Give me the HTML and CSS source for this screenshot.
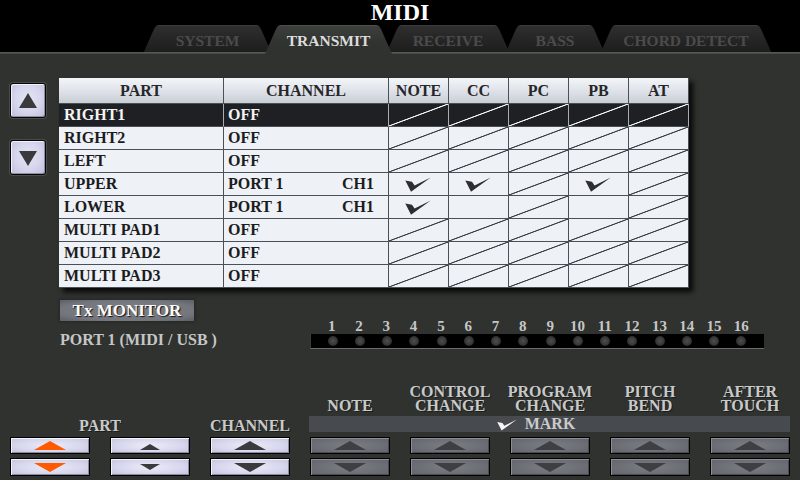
FILE: index.html
```html
<!DOCTYPE html>
<html>
<head>
<meta charset="utf-8">
<title>MIDI</title>
<link rel="stylesheet" href="styles.css">
</head>
<body>
<svg class="defs" width="0" height="0" aria-hidden="true">
  <defs>
    <symbol id="chk" viewBox="0 0 26 15">
      <path d="M0.3 3.6 L7 4.8 L9.6 8.4 L25.7 0.4 L6 14.7 Z"/>
    </symbol>
  </defs>
</svg>
<div class="screen">
  <header class="head">
    <div class="title">MIDI</div>
    <nav class="tabs">
      <div class="tab w-system">SYSTEM</div>
      <div class="tab w-transmit active">TRANSMIT</div>
      <div class="tab w-receive">RECEIVE</div>
      <div class="tab w-bass">BASS</div>
      <div class="tab w-chord">CHORD DETECT</div>
    </nav>
  </header>

  <main class="main">
    <section class="top">
      <div class="scroll">
        <div class="sbtn"><span class="stri up"></span></div>
        <div class="sbtn"><span class="stri down"></span></div>
      </div>

      <div class="grid">
        <div class="c h">PART</div><div class="c h">CHANNEL</div><div class="c h">NOTE</div><div class="c h">CC</div><div class="c h">PC</div><div class="c h">PB</div><div class="c h">AT</div>

        <div class="c sel">RIGHT1</div><div class="c sel ch">OFF</div><div class="c sel na"></div><div class="c sel na"></div><div class="c sel na"></div><div class="c sel na"></div><div class="c sel na"></div>

        <div class="c">RIGHT2</div><div class="c ch">OFF</div><div class="c na"></div><div class="c na"></div><div class="c na"></div><div class="c na"></div><div class="c na"></div>

        <div class="c">LEFT</div><div class="c ch">OFF</div><div class="c na"></div><div class="c na"></div><div class="c na"></div><div class="c na"></div><div class="c na"></div>

        <div class="c">UPPER</div><div class="c ch"><span>PORT 1</span><span>CH1</span></div><div class="c ok"><svg class="chk"><use href="#chk"/></svg></div><div class="c ok"><svg class="chk"><use href="#chk"/></svg></div><div class="c na"></div><div class="c ok"><svg class="chk"><use href="#chk"/></svg></div><div class="c na"></div>

        <div class="c">LOWER</div><div class="c ch"><span>PORT 1</span><span>CH1</span></div><div class="c ok"><svg class="chk"><use href="#chk"/></svg></div><div class="c ok"></div><div class="c na"></div><div class="c ok"></div><div class="c na"></div>

        <div class="c">MULTI PAD1</div><div class="c ch">OFF</div><div class="c na"></div><div class="c na"></div><div class="c na"></div><div class="c na"></div><div class="c na"></div>

        <div class="c">MULTI PAD2</div><div class="c ch">OFF</div><div class="c na"></div><div class="c na"></div><div class="c na"></div><div class="c na"></div><div class="c na"></div>

        <div class="c">MULTI PAD3</div><div class="c ch">OFF</div><div class="c na"></div><div class="c na"></div><div class="c na"></div><div class="c na"></div><div class="c na"></div>
      </div>
    </section>

    <section class="monitor">
      <div class="mon-left">
        <div class="txbtn">Tx MONITOR</div>
        <div class="port">PORT 1 (MIDI / USB )</div>
      </div>
      <div class="mon-right">
        <div class="nums">
          <span>1</span><span>2</span><span>3</span><span>4</span><span>5</span><span>6</span><span>7</span><span>8</span>
          <span>9</span><span>10</span><span>11</span><span>12</span><span>13</span><span>14</span><span>15</span><span>16</span>
        </div>
        <div class="leds">
          <i class="led"></i><i class="led"></i><i class="led"></i><i class="led"></i><i class="led"></i><i class="led"></i><i class="led"></i><i class="led"></i>
          <i class="led"></i><i class="led"></i><i class="led"></i><i class="led"></i><i class="led"></i><i class="led"></i><i class="led"></i><i class="led"></i>
        </div>
      </div>
    </section>

    <section class="controls">
      <div class="lbl l-part">PART</div>
      <div class="lbl l-chan">CHANNEL</div>
      <div class="lbl l-note">NOTE</div>
      <div class="lbl l-cc"><span>CONTROL</span><span>CHANGE</span></div>
      <div class="lbl l-pc"><span>PROGRAM</span><span>CHANGE</span></div>
      <div class="lbl l-pb"><span>PITCH</span><span>BEND</span></div>
      <div class="lbl l-at"><span>AFTER</span><span>TOUCH</span></div>

      <div class="markbar"><svg class="mchk"><use href="#chk"/></svg><span>MARK</span></div>

      <div class="kb up lite c1"><span class="tri up orange"></span></div>
      <div class="kb up lite c2"><span class="tri up small"></span></div>
      <div class="kb up lite c3"><span class="tri up"></span></div>
      <div class="kb up gray c4"><span class="tri up"></span></div>
      <div class="kb up gray c5"><span class="tri up"></span></div>
      <div class="kb up gray c6"><span class="tri up"></span></div>
      <div class="kb up gray c7"><span class="tri up"></span></div>
      <div class="kb up gray c8"><span class="tri up"></span></div>

      <div class="kb down lite c1"><span class="tri down orange"></span></div>
      <div class="kb down lite c2"><span class="tri down small"></span></div>
      <div class="kb down lite c3"><span class="tri down"></span></div>
      <div class="kb down gray c4"><span class="tri down"></span></div>
      <div class="kb down gray c5"><span class="tri down"></span></div>
      <div class="kb down gray c6"><span class="tri down"></span></div>
      <div class="kb down gray c7"><span class="tri down"></span></div>
      <div class="kb down gray c8"><span class="tri down"></span></div>
    </section>
  </main>
</div>
</body>
</html>
```

FILE: styles.css
```css
* { box-sizing: border-box; margin: 0; padding: 0; }

html, body {
  width: 800px;
  height: 480px;
  overflow: hidden;
  background: #2f322f;
}

body {
  font-family: "Liberation Serif", "Times New Roman", serif;
  font-weight: bold;
}

.defs { position: absolute; }

.screen { width: 800px; height: 480px; }

/* ---------- header ---------- */
.head {
  background: #000;
  height: 54px;
}

.title {
  height: 25px;
  line-height: 25px;
  text-align: center;
  color: #fff;
  font-size: 24px;
}

.tabs {
  position: relative;
  display: flex;
  height: 29px;
  padding-left: 143px;
}

.tabs::after {
  content: "";
  position: absolute;
  left: 0;
  right: 0;
  bottom: 0;
  height: 2px;
  background: linear-gradient(#5e605e, #3f423f);
  z-index: 1;
}

.tab {
  position: relative;
  height: 29px;
  line-height: 29px;
  padding-top: 1px;
  text-align: center;
  font-size: 15.5px;
  color: #4b4b4b;
  background: linear-gradient(#2f2f2f, #1c1c1c);
  box-shadow: inset 0 1px 0 #3c3c3c;
  clip-path: polygon(0 100%, 11px 4px, 13px 1px, 16px 0, calc(100% - 16px) 0, calc(100% - 13px) 1px, calc(100% - 11px) 4px, 100% 100%);
}

.tab.active {
  z-index: 2;
  color: #dcdcdc;
  background: linear-gradient(#3d403d, #30332f 60%, #2f322f);
  box-shadow: inset 0 1px 0 #4e514e;
}

.w-system { width: 129px; }
.w-transmit { width: 127px; margin-left: -7px; }
.w-receive { width: 124px; margin-left: -6px; }
.w-bass { width: 100px; margin-left: -5px; }
.w-chord { width: 172px; margin-left: -5px; }

/* ---------- main ---------- */
.main {
  padding: 24px 0 0 10px;
}

.top {
  display: flex;
  align-items: flex-start;
  gap: 13px;
}

.scroll {
  width: 36px;
  display: flex;
  flex-direction: column;
  gap: 22px;
  padding-top: 5px;
}

.sbtn {
  width: 36px;
  height: 35px;
  border: 1px solid #050505;
  border-radius: 3px;
  background: radial-gradient(ellipse at 50% 45%, #e6e6f6 0%, #d4d4ec 55%, #bebed8 100%);
  box-shadow: inset 1px 1px 0 #f2f2fc, inset -1px -1px 0 #8e8ea8, 0 0 0 1px #4a4c4a;
  display: flex;
  align-items: center;
  justify-content: center;
}

.stri {
  width: 0;
  height: 0;
  border-left: 9px solid transparent;
  border-right: 9px solid transparent;
}
.stri.up { border-bottom: 15px solid #3a3a3c; margin-top: -1px; }
.stri.down { border-top: 15px solid #3a3a3c; margin-top: 1px; }

/* table */
.grid {
  display: grid;
  grid-template-columns: 165px 165px repeat(5, 60px);
  width: 630px;
  box-shadow: 4px 4px 5px rgba(0, 0, 0, 0.85);
}

.c {
  height: 23px;
  line-height: 22px;
  padding-left: 5px;
  font-size: 16px;
  color: #1c1c1e;
  white-space: nowrap;
  background: #eef2f7;
  border-right: 1px solid #4a5058;
  border-bottom: 1px solid #4a5058;
}

.c.h {
  height: 26px;
  line-height: 25px;
  padding: 0;
  text-align: center;
  color: #26262a;
  background: linear-gradient(#f3f5f8, #dfe3e9 50%, #c9ced6);
}

.c.ch {
  display: flex;
  justify-content: space-between;
  padding-left: 4px;
  padding-right: 14px;
}

.c.na {
  padding: 0;
  background-image: linear-gradient(to bottom right, transparent calc(50% - 0.9px), #3d434b calc(50% - 0.3px), #3d434b calc(50% + 0.3px), transparent calc(50% + 0.9px));
}

.c.ok {
  padding: 0;
  display: flex;
  align-items: center;
  justify-content: center;
}

.c.sel {
  background-color: #1e2024;
  color: #f4f4f4;
  border-right-color: #a7adb5;
  border-bottom-color: #4a5058;
}

.c.sel.na {
  background-image: linear-gradient(to bottom right, transparent calc(50% - 0.9px), #f0f2f5 calc(50% - 0.3px), #f0f2f5 calc(50% + 0.3px), transparent calc(50% + 0.9px));
}

.chk {
  width: 26px;
  height: 15px;
  fill: #2c2e33;
  margin-left: -1px;
}

/* ---------- monitor ---------- */
.monitor {
  display: flex;
  margin: 12px 0 0 50px;
}

.mon-left { width: 250px; }

.txbtn {
  width: 134px;
  height: 21px;
  line-height: 21px;
  text-align: center;
  font-size: 17px;
  color: #fafafa;
  text-shadow: 1px 1px 1px #111;
  background: radial-gradient(ellipse at center, #7e8088 0%, #74767e 70%, #5c5e64 100%);
  box-shadow: 0 0 2px 1px #262826;
}

.port {
  margin-top: 11px;
  font-size: 16px;
  line-height: 16px;
  color: #c6c6c6;
}

.mon-right { padding-top: 19px; }

.nums, .leds {
  display: grid;
  grid-template-columns: repeat(16, 1fr);
  width: 454px;
  padding: 0 9px 0 8px;
}

.nums {
  font-size: 15px;
  line-height: 15px;
  color: #c6c6c6;
  text-align: center;
}

.leds {
  height: 15px;
  background: #000;
  border-bottom: 1px solid #6c6c6c;
  border-left: 1px solid #3a3a3a;
  align-items: center;
  justify-items: center;
}

.led {
  display: block;
  width: 10px;
  height: 10px;
  border-radius: 50%;
  background: radial-gradient(circle at 50% 50%, #4c4c4c 0%, #3c3c3c 45%, #262626 80%, #0a0a0a 100%);
}

/* ---------- controls ---------- */
.controls {
  display: grid;
  grid-template-columns: repeat(8, 80px);
  grid-template-rows: 27px auto auto auto;
  column-gap: 20px;
  margin-top: 36px;
}

.lbl {
  display: flex;
  flex-direction: column;
  align-items: center;
  font-size: 16px;
  line-height: 13.5px;
  color: #c9c9c9;
  text-align: center;
  text-shadow: 1px 1px 0 #1c1e1c;
  align-self: end;
  white-space: nowrap;
}

.lbl span { display: block; height: 13.5px; }

.l-part { grid-column: 1 / 3; grid-row: 1 / 3; }
.l-chan { grid-column: 3; grid-row: 1 / 3; }
.l-note { grid-column: 4; grid-row: 1; }
.l-cc { grid-column: 5; grid-row: 1; }
.l-pc { grid-column: 6; grid-row: 1; }
.l-pb { grid-column: 7; grid-row: 1; }
.l-at { grid-column: 8; grid-row: 1; }

.markbar {
  grid-column: 4 / 9;
  grid-row: 2;
  margin: 4px 0 0 -1px;
  height: 16px;
  background: #474a4f;
  display: flex;
  align-items: center;
  justify-content: center;
  gap: 8px;
  padding-right: 27px;
  font-size: 16px;
  line-height: 16px;
  color: #cacaca;
}

.mchk {
  width: 20px;
  height: 12px;
  fill: #f4f4f4;
  margin-top: 2px;
}

.kb {
  display: flex;
  align-items: center;
  justify-content: center;
  border: 1px solid #000;
}

.kb.up { grid-row: 3; height: 17px; margin-top: 5px; }
.kb.down { grid-row: 4; height: 18px; margin-top: 4px; }

.c1 { grid-column: 1; }
.c2 { grid-column: 2; }
.c3 { grid-column: 3; }
.c4 { grid-column: 4; }
.c5 { grid-column: 5; }
.c6 { grid-column: 6; }
.c7 { grid-column: 7; }
.c8 { grid-column: 8; }

.kb.lite {
  background: radial-gradient(ellipse at center, #ececf8 0%, #d8d8ee 55%, #c2c2dc 100%);
  box-shadow: inset 1px 1px 0 #f4f4fc, inset -1px -1px 0 #8a8aa2;
}

.kb.gray {
  background: radial-gradient(ellipse at center, #7c7e86 0%, #6e7078 55%, #62646c 100%);
  box-shadow: inset 1px 1px 0 #8c8e96, inset -1px -1px 0 #4a4c52;
}

.tri {
  width: 0;
  height: 0;
  border-left: 16px solid transparent;
  border-right: 16px solid transparent;
}
.tri.up { border-bottom: 9px solid #3b3b3d; }
.tri.down { border-top: 9px solid #3b3b3d; }

.tri.small { border-left-width: 10px; border-right-width: 10px; }
.tri.up.small { border-bottom-width: 6px; margin-top: 2px; }
.tri.down.small { border-top-width: 6px; margin-top: -1px; }

.tri.up.orange { border-bottom-color: #ff5a00; }
.tri.down.orange { border-top-color: #ff5a00; }

.kb.gray .tri.up { border-bottom-color: #3e3f42; }
.kb.gray .tri.down { border-top-color: #3e3f42; }
```
